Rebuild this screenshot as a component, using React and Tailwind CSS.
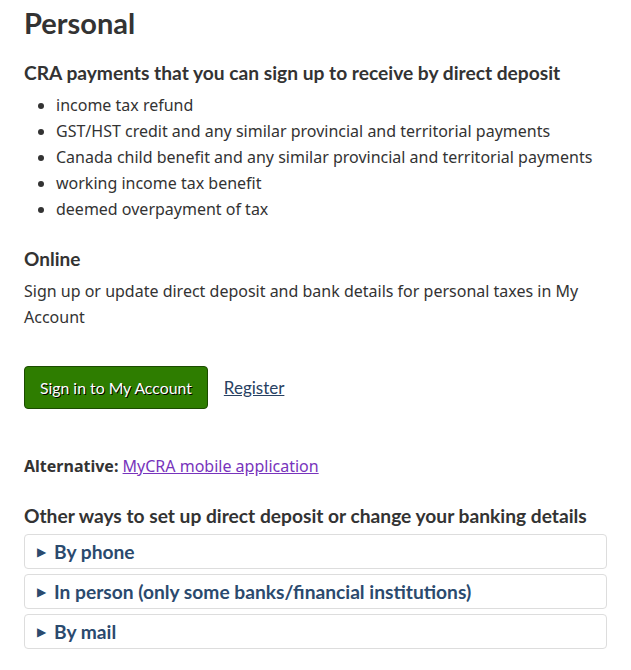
import React from 'react';

const lato = { fontFamily: 'Lato, "Noto Sans", sans-serif' };

const payments = [
  'income tax refund',
  'GST/HST credit and any similar provincial and territorial payments',
  'Canada child benefit and any similar provincial and territorial payments',
  'working income tax benefit',
  'deemed overpayment of tax',
];

const otherWays = [
  'By phone',
  'In person (only some banks/financial institutions)',
  'By mail',
];

function Summary({ label }) {
  return (
    <div className="border border-[#dddddd] rounded-[4px] h-[35px] flex items-center pl-[12px]">
      <span className="text-[#2b4a6e] text-[12px] mr-[8px] leading-none">▶</span>
      <span className="font-['Lato',sans-serif] font-bold text-[19.2px] text-[#2b4a6e]">{label}</span>
    </div>
  );
}

export default function App() {
  return (
    <div className="bg-white w-[631px] h-[670px] px-[24px] text-[#333333] font-['Noto_Sans',sans-serif] text-[16px] leading-[26px]">
      <h2 className="font-['Lato',sans-serif] font-bold text-[29px] leading-[38px] pt-[4px]">Personal</h2>

      <h3 className="font-['Lato',sans-serif] font-bold text-[19.2px] leading-[24px] mt-[19px]">
        CRA payments that you can sign up to receive by direct deposit
      </h3>
      <ul className="mt-[7px] pl-[32px] list-disc">
        {payments.map(p => (
          <li key={p}>{p}</li>
        ))}
      </ul>

      <h4 className="font-['Lato',sans-serif] font-bold text-[19px] leading-[24px] mt-[25px]">Online</h4>
      <p className="mt-[7px]">
        Sign up or update direct deposit and bank details for personal taxes in My Account
      </p>

      <div className="flex items-center mt-[36px]">
        <button
          type="button"
          className="bg-[#2e7d00] border border-[#1b4b00] rounded-[4px] text-white h-[43px] px-[15px] text-[15.8px] [text-shadow:1px_1px_0_#000]"
          style={lato}
        >
          Sign in to My Account
        </button>
        <a href="#" className="ml-[16px] underline text-[#284162] text-[17px]" style={lato}>Register</a>
      </div>

      <p className="mt-[44px]">
        <strong className="font-bold">Alternative:</strong>{' '}
        <a href="#" className="underline text-[#7834bc]">MyCRA mobile application</a>
      </p>

      <h3 className="font-['Lato',sans-serif] font-bold text-[19.2px] leading-[24px] mt-[25px]">
        Other ways to set up direct deposit or change your banking details
      </h3>
      <div className="mt-[6px] flex flex-col gap-[5px]">
        {otherWays.map(w => (
          <Summary key={w} label={w} />
        ))}
      </div>
    </div>
  );
}
